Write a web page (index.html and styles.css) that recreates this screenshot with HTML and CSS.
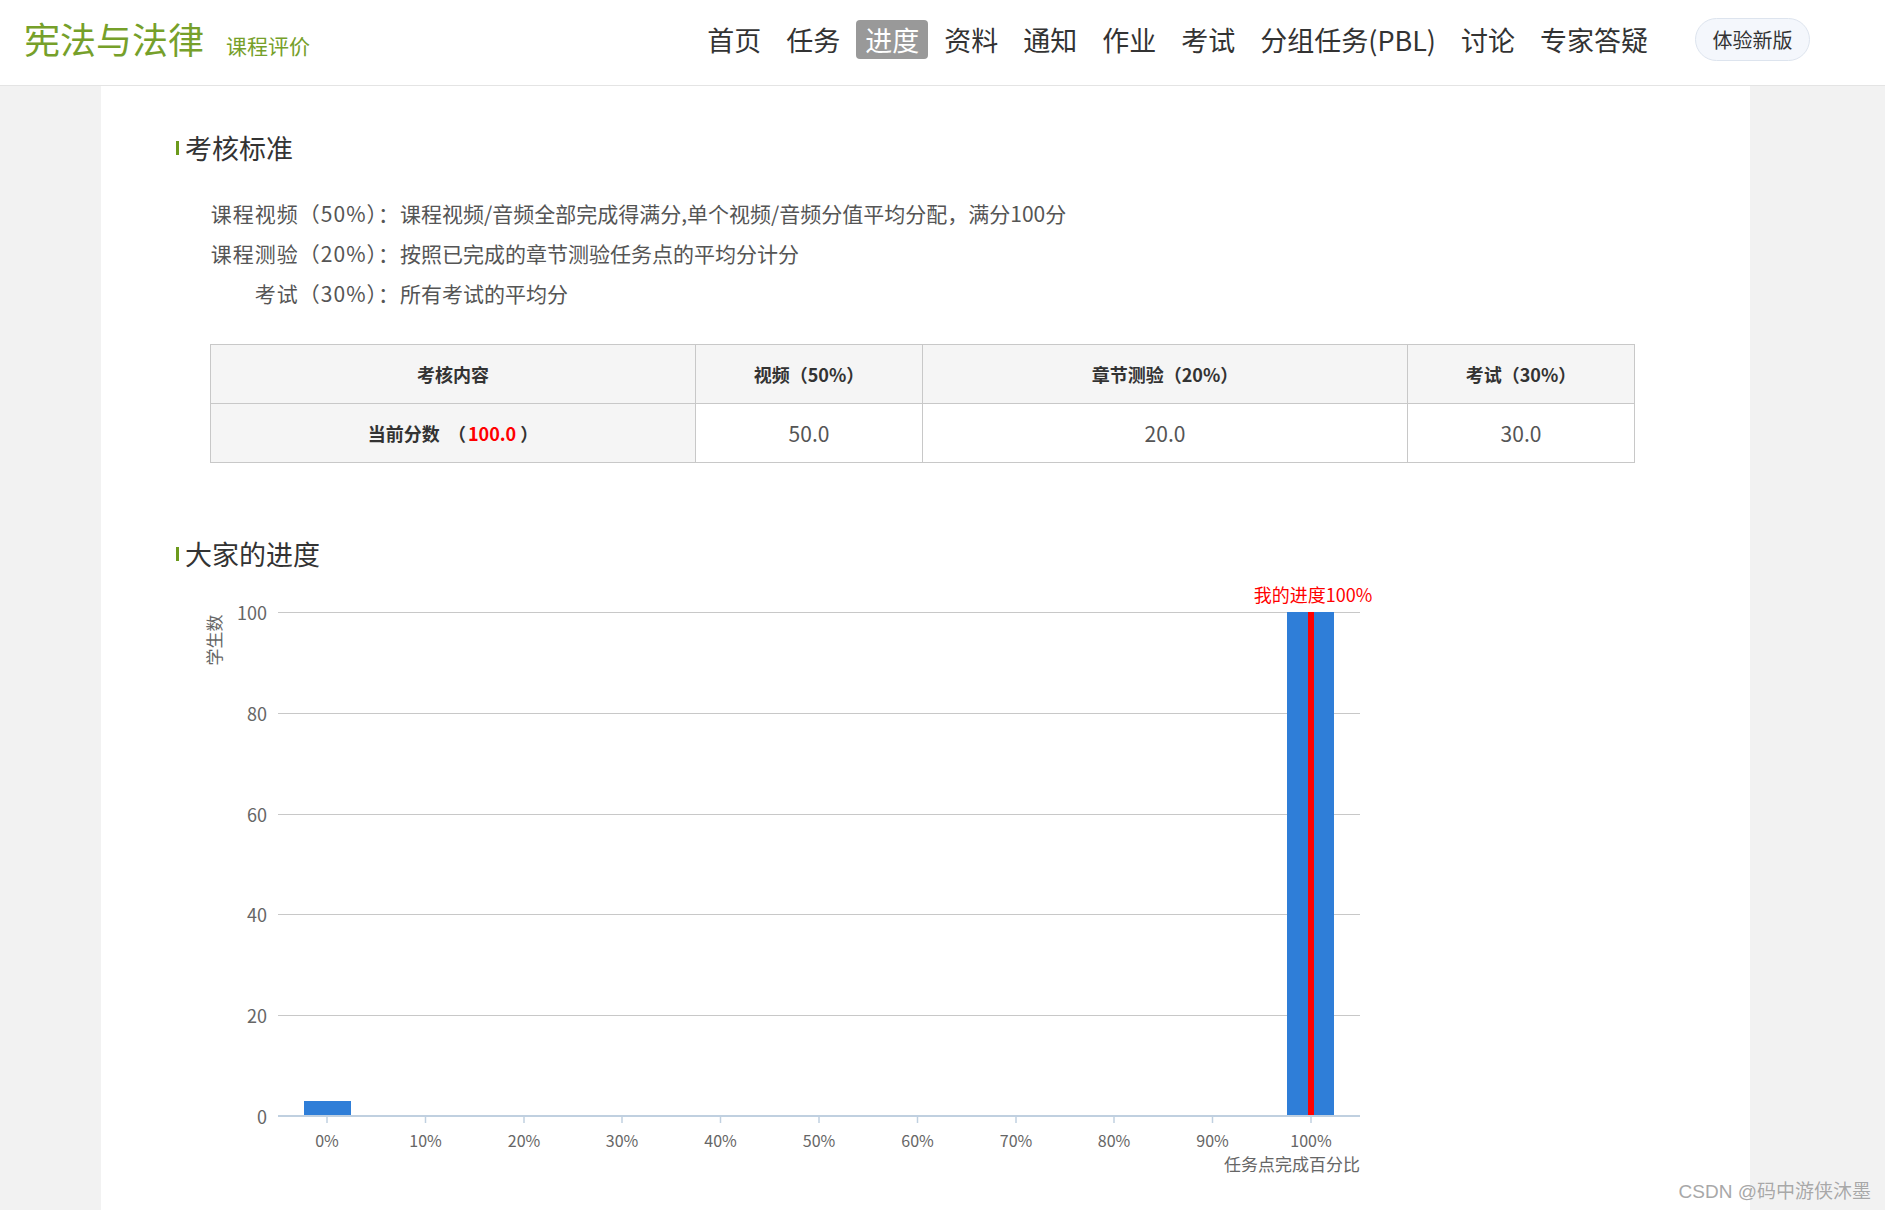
FILE: index.html
```html
<!DOCTYPE html>
<html lang="zh-CN">
<head>
<meta charset="utf-8">
<title>课程评价</title>
<link rel="stylesheet" href="styles.css">
</head>
<body>
<header class="topbar">
  <div class="brand">
    <span class="brand-name">宪法与法律</span>
    <span class="brand-sub">课程评价</span>
  </div>
  <nav class="nav">
    <a class="nav-item">首页</a>
    <a class="nav-item">任务</a>
    <a class="nav-item active">进度</a>
    <a class="nav-item">资料</a>
    <a class="nav-item">通知</a>
    <a class="nav-item">作业</a>
    <a class="nav-item">考试</a>
    <a class="nav-item">分组任务(PBL)</a>
    <a class="nav-item">讨论</a>
    <a class="nav-item">专家答疑</a>
  </nav>
  <a class="new-btn">体验新版</a>
</header>

<main class="panel">
  <h2 class="sec-title">考核标准</h2>
  <ul class="criteria">
    <li><span class="crit-label">课程视频（50%）：</span><span>课程视频/音频全部完成得满分,单个视频/音频分值平均分配，满分100分</span></li>
    <li><span class="crit-label">课程测验（20%）：</span><span>按照已完成的章节测验任务点的平均分计分</span></li>
    <li><span class="crit-label">考试（30%）：</span><span>所有考试的平均分</span></li>
  </ul>

  <table class="score">
    <colgroup>
      <col class="c-wide"><col class="c-narrow"><col class="c-wide"><col class="c-narrow">
    </colgroup>
    <tr class="head">
      <th>考核内容</th>
      <th>视频（50%）</th>
      <th>章节测验（20%）</th>
      <th>考试（30%）</th>
    </tr>
    <tr>
      <th class="cur">当前分数&nbsp;&nbsp;（<span class="red">100.0</span>）</th>
      <td>50.0</td>
      <td>20.0</td>
      <td>30.0</td>
    </tr>
  </table>

  <h2 class="sec-title sec-two">大家的进度</h2>
  <svg class="chart" width="1649" height="610" viewBox="0 0 1649 610">
    <g class="grid">
      <line x1="177" y1="40.5" x2="1259" y2="40.5"/>
      <line x1="177" y1="141.5" x2="1259" y2="141.5"/>
      <line x1="177" y1="242.5" x2="1259" y2="242.5"/>
      <line x1="177" y1="342.5" x2="1259" y2="342.5"/>
      <line x1="177" y1="443.5" x2="1259" y2="443.5"/>
    </g>
    <g class="ylab">
      <text x="166" y="40">100</text>
      <text x="166" y="141">80</text>
      <text x="166" y="242">60</text>
      <text x="166" y="342">40</text>
      <text x="166" y="443">20</text>
      <text x="166" y="544">0</text>
    </g>
    <text class="yname" transform="translate(112 68) rotate(-90)">学生数</text>
    <rect class="bar" x="203" y="529" width="47" height="15"/>
    <rect class="bar" x="1186" y="40" width="47" height="504"/>
    <rect class="mine" x="1207" y="40" width="6" height="504"/>
    <text class="mine-label" x="1212" y="22">我的进度100%</text>
    <line class="axis" x1="177" y1="544" x2="1259" y2="544"/>
    <g class="ticks">
      <line x1="226" y1="544" x2="226" y2="551"/>
      <line x1="324.5" y1="544" x2="324.5" y2="551"/>
      <line x1="423" y1="544" x2="423" y2="551"/>
      <line x1="521" y1="544" x2="521" y2="551"/>
      <line x1="619.5" y1="544" x2="619.5" y2="551"/>
      <line x1="718" y1="544" x2="718" y2="551"/>
      <line x1="816.5" y1="544" x2="816.5" y2="551"/>
      <line x1="915" y1="544" x2="915" y2="551"/>
      <line x1="1013" y1="544" x2="1013" y2="551"/>
      <line x1="1111.5" y1="544" x2="1111.5" y2="551"/>
      <line x1="1210" y1="544" x2="1210" y2="551"/>
    </g>
    <g class="xlab">
      <text x="226" y="568">0%</text>
      <text x="324.5" y="568">10%</text>
      <text x="423" y="568">20%</text>
      <text x="521" y="568">30%</text>
      <text x="619.5" y="568">40%</text>
      <text x="718" y="568">50%</text>
      <text x="816.5" y="568">60%</text>
      <text x="915" y="568">70%</text>
      <text x="1013" y="568">80%</text>
      <text x="1111.5" y="568">90%</text>
      <text x="1210" y="568">100%</text>
    </g>
    <text class="xname" x="1259" y="591">任务点完成百分比</text>
  </svg>
</main>

<div class="watermark">CSDN @码中游侠沐墨</div>
</body>
</html>
```

FILE: styles.css
```css
* { box-sizing: border-box; }

html, body {
  margin: 0;
  padding: 0;
  height: 1210px;
  overflow: hidden;
}

body {
  background: #f2f2f2;
  font-family: "Noto Sans CJK SC", "Noto Sans", sans-serif;
  color: #333;
  position: relative;
}

.topbar {
  height: 86px;
  background: #fff;
  border-bottom: 1px solid #e4e4e4;
  display: flex;
  align-items: center;
  padding: 0 75px 6px 24px;
}

.brand {
  display: flex;
  align-items: baseline;
  gap: 22px;
}

.brand-name {
  font-size: 36px;
  color: #76a02a;
  line-height: 1;
}

.brand-sub {
  font-size: 21px;
  color: #76a02a;
}

.nav {
  margin-left: auto;
  display: flex;
  gap: 7px;
}

.nav-item {
  font-size: 27px;
  line-height: 39px;
  height: 39px;
  padding: 0 9px;
  color: #333;
  border-radius: 4px;
  white-space: nowrap;
}

.nav-item.active {
  background: #999;
  color: #fff;
}

.new-btn {
  margin-left: 38px;
  width: 115px;
  height: 43px;
  border: 1px solid #dde4ee;
  background: #f4f7fc;
  border-radius: 22px;
  font-size: 20px;
  line-height: 41px;
  text-align: center;
  color: #333;
}

.panel {
  margin-left: 101px;
  width: 1649px;
  height: 1124px;
  background: #fff;
  padding: 44px 0 0 0;
}

.sec-title {
  margin: 0 0 0 75px;
  font-size: 27px;
  font-weight: normal;
  line-height: 36px;
  height: 36px;
  color: #333;
  display: flex;
  align-items: center;
}

.sec-title::before {
  content: "";
  display: block;
  width: 3px;
  height: 14px;
  background: #6c9a1c;
  margin-right: 6px;
}

.criteria {
  list-style: none;
  margin: 27px 0 0 87px;
  padding: 0;
  font-size: 21px;
  color: #555;
}

.criteria li {
  display: flex;
  line-height: 40px;
  height: 40px;
  white-space: nowrap;
}

.crit-label {
  width: 212px;
  text-align: right;
  flex: none;
  letter-spacing: 1px;
  white-space: nowrap;
}

.score {
  margin: 31px 0 0 109px;
  width: 1425px;
  border-collapse: collapse;
  table-layout: fixed;
}

.c-wide { width: 485px; }
.c-narrow { width: 227px; }

.score th, .score td {
  border: 1px solid #c8c8c8;
  height: 59px;
  text-align: center;
  padding: 0;
}

.score tr.head th {
  background: #f5f5f5;
  font-size: 18px;
  font-weight: bold;
  color: #333;
}

.score th.cur {
  background: #f5f5f5;
  font-size: 18px;
  font-weight: bold;
  color: #333;
}

.score td {
  font-size: 21px;
  color: #555;
}

.red {
  color: #ff0000;
  padding: 0 4px 0 2px;
}

.sec-two {
  margin-top: 73px;
}

.chart {
  display: block;
  font-family: "Noto Sans CJK SC", "Noto Sans", sans-serif;
}

.grid line {
  stroke: #c8c8c8;
  stroke-width: 1;
}

.ylab text {
  font-size: 18px;
  fill: #666;
  text-anchor: end;
  dominant-baseline: central;
}

.yname {
  font-size: 17px;
  fill: #666;
  text-anchor: middle;
  dominant-baseline: central;
}

.bar { fill: #2f7ed8; }
.mine { fill: #ff0000; }

.mine-label {
  font-size: 18px;
  fill: #ff0000;
  text-anchor: middle;
  dominant-baseline: central;
}

.axis {
  stroke: #c0d0e0;
  stroke-width: 2;
}

.ticks line {
  stroke: #c0d0e0;
  stroke-width: 1.5;
}

.xlab text {
  font-size: 16px;
  fill: #666;
  text-anchor: middle;
  dominant-baseline: central;
}

.xname {
  font-size: 17px;
  fill: #666;
  text-anchor: end;
  dominant-baseline: central;
}

.watermark {
  position: absolute;
  right: 14px;
  bottom: 7px;
  font-family: "Liberation Sans", "Noto Sans CJK SC", sans-serif;
  font-size: 19px;
  color: #a8a8a8;
  text-shadow: 0 0 1px #fff;
}
```
